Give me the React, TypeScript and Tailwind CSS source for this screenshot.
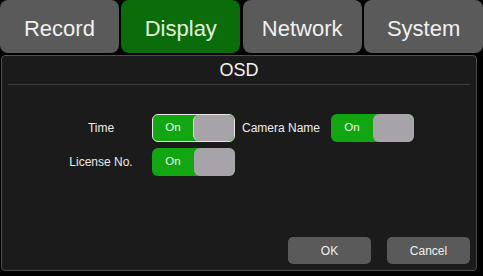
import React from "react";

const font = { fontFamily: '"Liberation Sans", Arial, sans-serif' };

function Toggle({ focused }: { focused?: boolean }) {
  return (
    <div
      className={
        "flex h-[28px] w-[83px] rounded-[6px] bg-[#13a613] " +
        (focused ? "border-[1.5px] border-[#e6e6e6]" : "")
      }
    >
      <span className="flex flex-1 items-center justify-center text-[11.5px] text-[#eaf6e6]">On</span>
      <div
        className={
          "w-[41px] rounded-[6px] bg-[#a6a4a9] " +
          (focused ? "border-l-[1.5px] border-[#e6e6e6]" : "")
        }
      />
    </div>
  );
}

export default function App() {
  const tabs = [
    { name: "Record", active: false },
    { name: "Display", active: true },
    { name: "Network", active: false },
    { name: "System", active: false },
  ];
  return (
    <div className="flex h-[276px] w-[483px] flex-col bg-black" style={font}>
      <div className="grid h-[53px] grid-cols-4 gap-[2.5px]">
        {tabs.map((t) => (
          <div
            key={t.name}
            className={
              "flex items-center justify-center rounded-[8px] pt-[3px] text-[22px] " +
              (t.active ? "bg-[#0a6d0a] text-[#e4f2dc]" : "bg-[#5a5a5a] text-[#f0f0f0]")
            }
          >
            {t.name}
          </div>
        ))}
      </div>
      <div className="mb-[5px] ml-[1px] mr-[6px] mt-[2px] flex flex-1 flex-col rounded-[4px] border border-[#4d4d4d] bg-[#1b1b1b]">
        <div className="flex h-[28px] items-center justify-center pt-[1px] text-[18px] text-[#f2f2f2]">OSD</div>
        <div className="mx-[6px] h-px bg-[#3c3c3c]" />
        <div className="flex flex-col gap-[6px] pt-[29px] text-[12px] text-[#ececec]">
          <div className="flex items-center">
            <div className="ml-[57px] w-[84px] text-center">Time</div>
            <div className="ml-[9px]">
              <Toggle focused />
            </div>
            <div className="ml-[4px] w-[84px] text-center">Camera Name</div>
            <div className="ml-[8px]">
              <Toggle />
            </div>
          </div>
          <div className="flex items-center">
            <div className="ml-[57px] w-[84px] text-center">License No.</div>
            <div className="ml-[9px]">
              <Toggle />
            </div>
          </div>
        </div>
        <div className="flex-1" />
        <div className="flex justify-end gap-[16px] pb-[6px] pr-[6px]">
          <div className="flex h-[27px] w-[83px] items-center justify-center rounded-[5px] bg-[#5a5a5a] text-[12px] text-[#f0f0f0]">
            OK
          </div>
          <div className="flex h-[27px] w-[83px] items-center justify-center rounded-[5px] bg-[#5a5a5a] text-[12px] text-[#f0f0f0]">
            Cancel
          </div>
        </div>
      </div>
    </div>
  );
}
